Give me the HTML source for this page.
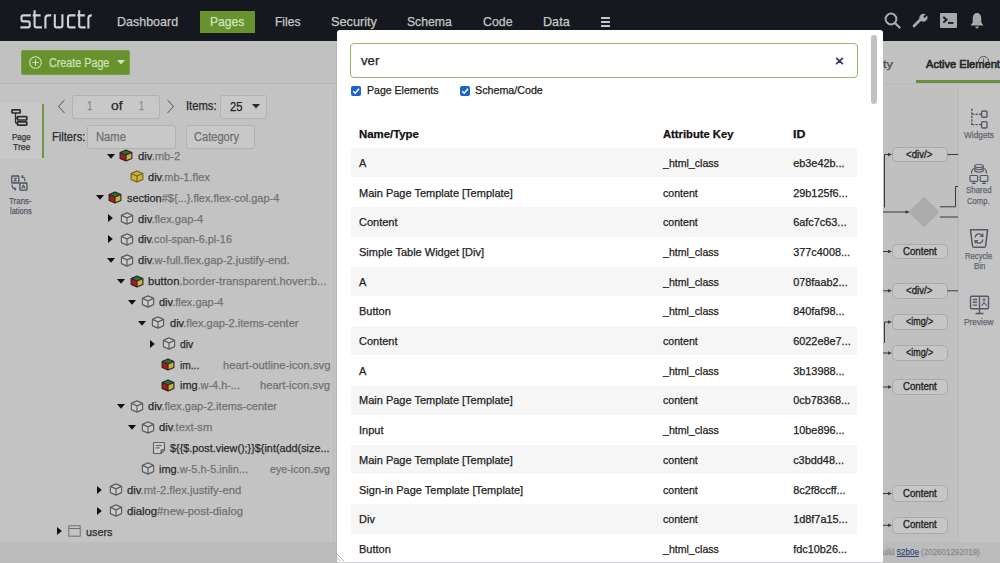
<!DOCTYPE html><html><head><meta charset="utf-8"><style>
html,body{margin:0;padding:0;width:1000px;height:563px;overflow:hidden;position:relative;font-family:"Liberation Sans", sans-serif}
.b{position:absolute;display:block}
.t{position:absolute;white-space:nowrap;line-height:1;transform-origin:0 0;-webkit-text-stroke:0.25px currentColor}
</style></head><body>
<div class="b" style="left:0.00px;top:0.00px;width:1000.00px;height:563.00px;background:#c2c2c2"></div>
<div class="b" style="left:0.00px;top:0.00px;width:1000.00px;height:41.00px;background:#16181f"></div>
<div class="b" style="left:0.00px;top:41.00px;width:1000.00px;height:41.50px;background:#c1c1c1"></div>
<div class="b" style="left:0.00px;top:82.50px;width:1000.00px;height:1.00px;background:#b9b9b9"></div>
<div class="b" style="left:0.00px;top:83.50px;width:337.00px;height:458.50px;background:#c3c3c3"></div>
<div class="b" style="left:0.00px;top:542.00px;width:1000.00px;height:21.00px;background:#bcbcbc"></div>
<div class="b" style="left:333.00px;top:83.50px;width:1.00px;height:458.50px;background:#bcbcbc"></div>
<div class="b" style="left:335.80px;top:41.00px;width:1.20px;height:522.00px;background:#b6b6b6"></div>
<svg class="b" style="left:0px;top:0px" width="100" height="40" viewBox="0 0 100 40">
<g fill="none" stroke="#d2d2d2" stroke-width="2.1" stroke-linecap="butt" stroke-linejoin="round">
<path d="M30.8 15.4 H23.4 Q21.5 15.4 21.5 17.3 V19.6 Q21.5 21.4 23.4 21.4 H27.8 Q29.7 21.4 29.7 23.3 V25.5 Q29.7 27.4 27.8 27.4 H20.4"/>
<path d="M34.6 10.3 V25.5 Q34.6 27.4 36.5 27.4 H41.9 M32.7 15.4 H40.6"/>
<path d="M45.4 28.5 V18.4 Q45.4 15.4 48.4 15.4 H51.2"/>
<path d="M54.8 14.3 V25.5 Q54.8 27.4 56.7 27.4 H60.5 Q62.4 27.4 62.4 25.5 V14.3"/>
<path d="M75.5 15.4 H69.9 Q68 15.4 68 17.3 V25.5 Q68 27.4 69.9 27.4 H75.5"/>
<path d="M79.2 10.3 V25.5 Q79.2 27.4 81.1 27.4 H85.6 M77.3 15.4 H84.8"/>
<path d="M88.4 28.5 V18.4 Q88.4 15.4 91.4 15.4 H91.8"/>
</g></svg>
<span id="t1" class="t" style="left:117.46px;top:14.99px;font-size:13.60px;color:#c8c8c8;font-weight:400;transform:scaleX(0.9184);">Dashboard</span>
<div class="b" style="left:200.00px;top:11.00px;width:55.00px;height:22.00px;background:#67922d"></div>
<span id="t2" class="t" style="left:210.16px;top:14.89px;font-size:13.60px;color:#d3e2c0;font-weight:400;transform:scaleX(0.8921);">Pages</span>
<span id="t3" class="t" style="left:275.06px;top:14.99px;font-size:13.60px;color:#c8c8c8;font-weight:400;transform:scaleX(0.8880);">Files</span>
<span id="t4" class="t" style="left:331.06px;top:14.99px;font-size:13.60px;color:#c8c8c8;font-weight:400;transform:scaleX(0.9344);">Security</span>
<span id="t5" class="t" style="left:407.46px;top:14.99px;font-size:13.60px;color:#c8c8c8;font-weight:400;transform:scaleX(0.8960);">Schema</span>
<span id="t6" class="t" style="left:483.06px;top:14.99px;font-size:13.60px;color:#c8c8c8;font-weight:400;transform:scaleX(0.9073);">Code</span>
<span id="t7" class="t" style="left:543.46px;top:14.99px;font-size:13.60px;color:#c8c8c8;font-weight:400;transform:scaleX(0.9293);">Data</span>
<div class="b" style="left:601.00px;top:17.30px;width:9.40px;height:2.00px;background:#c8c8c8;border-radius:0.5px"></div>
<div class="b" style="left:601.00px;top:21.00px;width:9.40px;height:2.00px;background:#c8c8c8;border-radius:0.5px"></div>
<div class="b" style="left:601.00px;top:24.70px;width:9.40px;height:2.00px;background:#c8c8c8;border-radius:0.5px"></div>
<svg class="b" style="left:884px;top:12px" width="17" height="17" viewBox="0 0 17 17"><circle cx="7" cy="7" r="5.4" fill="none" stroke="#a9a9a9" stroke-width="2"/><path d="M11 11 L15.5 15.5" stroke="#a9a9a9" stroke-width="2.4" stroke-linecap="round"/></svg>
<svg class="b" style="left:912px;top:12px" width="16" height="16" viewBox="0 0 16 16"><path d="M2 14 L8.5 7.5" stroke="#a9a9a9" stroke-width="2.8" stroke-linecap="round"/><path d="M8 8 A4.2 4.2 0 0 1 13.6 2.2 L11.3 4.6 L12.6 5.9 L15 3.5 A4.2 4.2 0 0 1 9 9 Z" fill="#a9a9a9"/></svg>
<svg class="b" style="left:940px;top:13px" width="17" height="15" viewBox="0 0 17 15"><rect x="0" y="0" width="17" height="15" rx="1" fill="#a9a9a9"/><path d="M3.3 4 L6.6 6.8 L3.3 9.6" fill="none" stroke="#16181f" stroke-width="1.8"/><rect x="8" y="9" width="5.5" height="1.8" fill="#16181f"/></svg>
<svg class="b" style="left:970px;top:12px" width="14" height="17" viewBox="0 0 14 17"><path d="M7 1 C9.8 1 11.3 3.5 11.3 6.5 V10.5 L13.5 13.5 H0.5 L2.7 10.5 V6.5 C2.7 3.5 4.2 1 7 1 Z" fill="#a9a9a9"/><path d="M5.3 14.5 H8.7 Q8.5 16.5 7 16.5 Q5.5 16.5 5.3 14.5Z" fill="#a9a9a9"/></svg>
<div class="b" style="left:21.00px;top:50.00px;width:109.40px;height:24.60px;background:#67922d;border-radius:3px;box-shadow:inset 0 0 0 1px #76a042"></div>
<svg class="b" style="left:29px;top:56px" width="13" height="13" viewBox="0 0 13 13"><circle cx="6.5" cy="6.5" r="5.8" fill="none" stroke="#cfe0b8" stroke-width="1.1"/><path d="M6.5 3.3 V9.7 M3.3 6.5 H9.7" stroke="#cfe0b8" stroke-width="1.1"/></svg>
<span id="t8" class="t" style="left:49.12px;top:56.74px;font-size:12.00px;color:#cfe0b6;font-weight:400;transform:scaleX(0.8957);">Create Page</span>
<svg class="b" style="left:117px;top:60px" width="8" height="4.5" viewBox="0 0 8 4.5"><path d="M0 0 H8 L4 4.5Z" fill="#d3e2c0"/></svg>
<div class="b" style="left:0.00px;top:103.00px;width:41.50px;height:55.50px;background:#c8c8c8"></div>
<div class="b" style="left:41.50px;top:104.00px;width:2.80px;height:53.50px;background:#72963f"></div>
<svg class="b" style="left:0;top:0" width="44" height="200" viewBox="0 0 44 200" fill="none" stroke="#2e2e2e" stroke-width="1.7" stroke-linejoin="round">
<rect x="12" y="109.8" width="8.2" height="3.2" rx="0.5"/><rect x="17.5" y="116.7" width="9.3" height="3.3" rx="0.5"/><rect x="17.5" y="121.9" width="9.3" height="3.2" rx="0.5"/>
<path d="M15.5 113 V116 Q15.5 118.3 17.5 118.3 M15.5 116 V121.5 Q15.5 123.5 17.5 123.5" stroke-width="1.3"/>
</svg>
<span id="t9" class="t" style="left:11.62px;top:131.64px;font-size:9.40px;color:#333;font-weight:400;transform:scaleX(0.8560);">Page</span>
<span id="t10" class="t" style="left:12.62px;top:141.64px;font-size:9.40px;color:#333;font-weight:400;transform:scaleX(0.9110);">Tree</span>
<svg class="b" style="left:0;top:0" width="44" height="200" viewBox="0 0 44 200" fill="none" stroke="#4d5262" stroke-width="1.3" stroke-linejoin="round">
<rect x="11.8" y="176" width="7" height="7" rx="0.6"/><rect x="19.9" y="183" width="7" height="7.2" rx="0.6"/>
<path d="M13.8 178.3 H16.8 L13.8 181 H16.8" stroke-width="1"/><path d="M21.8 188.5 L23.4 184.8 L25 188.5 M22.4 187.2 H24.4" stroke-width="1"/>
<path d="M25 181.2 Q25 177 21.5 176.5 M21.5 176.5 L23 175.3 M21.5 176.5 L22.8 178" stroke-width="1.1"/>
<path d="M12 184.5 Q12 188.8 16 189 M16 189 L14.6 187.6 M16 189 L14.6 190.3" stroke-width="1.1"/>
</svg>
<span id="t11" class="t" style="left:9.13px;top:197.21px;font-size:9.20px;color:#555a66;font-weight:400;transform:scaleX(0.8677);">Trans-</span>
<span id="t12" class="t" style="left:9.63px;top:207.21px;font-size:9.20px;color:#555a66;font-weight:400;transform:scaleX(0.8183);">lations</span>
<svg class="b" style="left:56.5px;top:99px" width="9" height="15" viewBox="0 0 9 15"><path d="M7.5 1 L1.5 7.5 L7.5 14" fill="none" stroke="#6a6a6a" stroke-width="1.1"/></svg>
<div class="b" style="left:71.50px;top:94.50px;width:88.50px;height:24.00px;border:1.4px solid #b2b2b2;border-radius:3px;box-sizing:border-box;background:#c8c8c8"></div>
<span id="t13" class="t" style="left:87.02px;top:100.44px;font-size:12.00px;color:#8a8a8a;font-weight:400;transform:scaleX(0.8164);">1</span>
<span id="t14" class="t" style="left:110.52px;top:100.44px;font-size:12.00px;color:#2a2a2a;font-weight:400;transform:scaleX(1.1442);">of</span>
<span id="t15" class="t" style="left:139.02px;top:100.44px;font-size:12.00px;color:#8a8a8a;font-weight:400;transform:scaleX(0.7417);">1</span>
<svg class="b" style="left:165.5px;top:99px" width="9" height="15" viewBox="0 0 9 15"><path d="M1.5 1 L7.5 7.5 L1.5 14" fill="none" stroke="#6a6a6a" stroke-width="1.1"/></svg>
<span id="t16" class="t" style="left:185.52px;top:100.44px;font-size:12.00px;color:#2a2a2a;font-weight:400;transform:scaleX(0.9354);">Items:</span>
<div class="b" style="left:219.50px;top:94.50px;width:47.00px;height:24.00px;border:1.4px solid #b2b2b2;border-radius:3px;box-sizing:border-box;background:#c8c8c8"></div>
<span id="t17" class="t" style="left:229.92px;top:100.64px;font-size:12.00px;color:#222;font-weight:400;transform:scaleX(0.9327);">25</span>
<svg class="b" style="left:252px;top:104px" width="8" height="4.5" viewBox="0 0 8 4.5"><path d="M0 0 H8 L4 4.5Z" fill="#2a2a2a"/></svg>
<span id="t18" class="t" style="left:51.52px;top:131.34px;font-size:12.00px;color:#2a2a2a;font-weight:400;transform:scaleX(0.9294);">Filters:</span>
<div class="b" style="left:87.40px;top:125.00px;width:89.10px;height:24.00px;border:1.4px solid #b2b2b2;border-radius:3px;box-sizing:border-box;background:#c8c8c8"></div>
<span id="t19" class="t" style="left:95.52px;top:131.34px;font-size:12.00px;color:#707070;font-weight:400;transform:scaleX(0.9358);">Name</span>
<div class="b" style="left:185.50px;top:125.00px;width:69.00px;height:24.00px;border:1.4px solid #b2b2b2;border-radius:3px;box-sizing:border-box;background:#c8c8c8"></div>
<span id="t20" class="t" style="left:193.52px;top:131.34px;font-size:12.00px;color:#707070;font-weight:400;transform:scaleX(0.9231);">Category</span>
<svg class="b" style="left:106.50px;top:153.60px" width="8" height="5" viewBox="0 0 8 5"><path d="M0 0 H8 L4 4.8Z" fill="#111"/></svg>
<svg class="b" style="left:119.00px;top:149.30px" width="14" height="13" viewBox="0 0 14 13">
<path d="M7 0.9 L12.9 3.4 L7 5.9 L1.1 3.4Z" fill="#2f6b3b"/><path d="M1.1 3.4 L7 5.9 V12.1 L1.1 9.6Z" fill="#a51b17"/><path d="M12.9 3.4 L7 5.9 V12.1 L12.9 9.6Z" fill="#cfae35"/>
<path d="M7 0.9 L12.9 3.4 V9.6 L7 12.1 L1.1 9.6 V3.4Z M1.1 3.4 L7 5.9 L12.9 3.4 M7 5.9 V12.1" fill="none" stroke="#262626" stroke-width="1.1" stroke-linejoin="round"/></svg>
<span id="t21" class="t" style="left:137.83px;top:149.90px;font-size:11.70px;color:#2a2a2a;font-weight:400;transform:scaleX(0.9606);"><span style="color:#2a2a2a">div</span><span style="color:#727272">.mb-2</span></span>
<svg class="b" style="left:130.00px;top:170.17px" width="14" height="13" viewBox="0 0 14 13">
<path d="M7 0.9 L12.9 3.4 V9.6 L7 12.1 L1.1 9.6 V3.4Z" fill="#cdb334"/>
<path d="M7 0.9 L12.9 3.4 V9.6 L7 12.1 L1.1 9.6 V3.4Z M1.1 3.4 L7 5.9 L12.9 3.4 M7 5.9 V12.1" fill="none" stroke="#6e6220" stroke-width="1.1" stroke-linejoin="round"/></svg>
<span id="t22" class="t" style="left:148.43px;top:170.77px;font-size:11.70px;color:#2a2a2a;font-weight:400;transform:scaleX(0.9441);"><span style="color:#2a2a2a">div</span><span style="color:#727272">.mb-1.flex</span></span>
<svg class="b" style="left:95.90px;top:195.34px" width="8" height="5" viewBox="0 0 8 5"><path d="M0 0 H8 L4 4.8Z" fill="#111"/></svg>
<svg class="b" style="left:108.40px;top:191.04px" width="14" height="13" viewBox="0 0 14 13">
<path d="M7 0.9 L12.9 3.4 L7 5.9 L1.1 3.4Z" fill="#2f6b3b"/><path d="M1.1 3.4 L7 5.9 V12.1 L1.1 9.6Z" fill="#a51b17"/><path d="M12.9 3.4 L7 5.9 V12.1 L12.9 9.6Z" fill="#cfae35"/>
<path d="M7 0.9 L12.9 3.4 V9.6 L7 12.1 L1.1 9.6 V3.4Z M1.1 3.4 L7 5.9 L12.9 3.4 M7 5.9 V12.1" fill="none" stroke="#262626" stroke-width="1.1" stroke-linejoin="round"/></svg>
<span id="t23" class="t" style="left:127.23px;top:191.64px;font-size:11.70px;color:#2a2a2a;font-weight:400;transform:scaleX(0.9372);"><span style="color:#2a2a2a">section</span><span style="color:#727272">#${...}.flex.flex-col.gap-4</span></span>
<svg class="b" style="left:107.70px;top:214.41px" width="5" height="8" viewBox="0 0 5 8"><path d="M0 0 V8 L4.8 4Z" fill="#111"/></svg>
<svg class="b" style="left:119.60px;top:211.91px" width="14" height="13" viewBox="0 0 14 13">
<path d="M7 0.9 L12.6 3.4 V9.6 L7 12.1 L1.4 9.6 V3.4Z" fill="#cdcdcd"/>
<path d="M7 0.9 L12.6 3.4 V9.6 L7 12.1 L1.4 9.6 V3.4Z M1.4 3.4 L7 5.9 L12.6 3.4 M7 5.9 V12.1" fill="none" stroke="#5f5f5f" stroke-width="1.2" stroke-linejoin="round"/></svg>
<span id="t24" class="t" style="left:137.83px;top:212.51px;font-size:11.70px;color:#2a2a2a;font-weight:400;transform:scaleX(0.9502);"><span style="color:#2a2a2a">div</span><span style="color:#727272">.flex.gap-4</span></span>
<svg class="b" style="left:107.70px;top:235.28px" width="5" height="8" viewBox="0 0 5 8"><path d="M0 0 V8 L4.8 4Z" fill="#111"/></svg>
<svg class="b" style="left:119.60px;top:232.78px" width="14" height="13" viewBox="0 0 14 13">
<path d="M7 0.9 L12.6 3.4 V9.6 L7 12.1 L1.4 9.6 V3.4Z" fill="#cdcdcd"/>
<path d="M7 0.9 L12.6 3.4 V9.6 L7 12.1 L1.4 9.6 V3.4Z M1.4 3.4 L7 5.9 L12.6 3.4 M7 5.9 V12.1" fill="none" stroke="#5f5f5f" stroke-width="1.2" stroke-linejoin="round"/></svg>
<span id="t25" class="t" style="left:137.83px;top:233.38px;font-size:11.70px;color:#2a2a2a;font-weight:400;transform:scaleX(0.9288);"><span style="color:#2a2a2a">div</span><span style="color:#727272">.col-span-6.pl-16</span></span>
<svg class="b" style="left:106.50px;top:257.95px" width="8" height="5" viewBox="0 0 8 5"><path d="M0 0 H8 L4 4.8Z" fill="#111"/></svg>
<svg class="b" style="left:119.60px;top:253.65px" width="14" height="13" viewBox="0 0 14 13">
<path d="M7 0.9 L12.6 3.4 V9.6 L7 12.1 L1.4 9.6 V3.4Z" fill="#cdcdcd"/>
<path d="M7 0.9 L12.6 3.4 V9.6 L7 12.1 L1.4 9.6 V3.4Z M1.4 3.4 L7 5.9 L12.6 3.4 M7 5.9 V12.1" fill="none" stroke="#5f5f5f" stroke-width="1.2" stroke-linejoin="round"/></svg>
<span id="t26" class="t" style="left:137.83px;top:254.25px;font-size:11.70px;color:#2a2a2a;font-weight:400;transform:scaleX(0.9541);"><span style="color:#2a2a2a">div</span><span style="color:#727272">.w-full.flex.gap-2.justify-end.</span></span>
<svg class="b" style="left:117.10px;top:278.82px" width="8" height="5" viewBox="0 0 8 5"><path d="M0 0 H8 L4 4.8Z" fill="#111"/></svg>
<svg class="b" style="left:129.60px;top:274.52px" width="14" height="13" viewBox="0 0 14 13">
<path d="M7 0.9 L12.9 3.4 L7 5.9 L1.1 3.4Z" fill="#2f6b3b"/><path d="M1.1 3.4 L7 5.9 V12.1 L1.1 9.6Z" fill="#a51b17"/><path d="M12.9 3.4 L7 5.9 V12.1 L12.9 9.6Z" fill="#cfae35"/>
<path d="M7 0.9 L12.9 3.4 V9.6 L7 12.1 L1.1 9.6 V3.4Z M1.1 3.4 L7 5.9 L12.9 3.4 M7 5.9 V12.1" fill="none" stroke="#262626" stroke-width="1.1" stroke-linejoin="round"/></svg>
<span id="t27" class="t" style="left:148.43px;top:275.12px;font-size:11.70px;color:#2a2a2a;font-weight:400;transform:scaleX(0.9675);"><span style="color:#2a2a2a">button</span><span style="color:#727272">.border-transparent.hover:b...</span></span>
<svg class="b" style="left:127.70px;top:299.69px" width="8" height="5" viewBox="0 0 8 5"><path d="M0 0 H8 L4 4.8Z" fill="#111"/></svg>
<svg class="b" style="left:140.80px;top:295.39px" width="14" height="13" viewBox="0 0 14 13">
<path d="M7 0.9 L12.6 3.4 V9.6 L7 12.1 L1.4 9.6 V3.4Z" fill="#cdcdcd"/>
<path d="M7 0.9 L12.6 3.4 V9.6 L7 12.1 L1.4 9.6 V3.4Z M1.4 3.4 L7 5.9 L12.6 3.4 M7 5.9 V12.1" fill="none" stroke="#5f5f5f" stroke-width="1.2" stroke-linejoin="round"/></svg>
<span id="t28" class="t" style="left:159.03px;top:295.99px;font-size:11.70px;color:#2a2a2a;font-weight:400;transform:scaleX(0.9385);"><span style="color:#2a2a2a">div</span><span style="color:#727272">.flex.gap-4</span></span>
<svg class="b" style="left:138.30px;top:320.56px" width="8" height="5" viewBox="0 0 8 5"><path d="M0 0 H8 L4 4.8Z" fill="#111"/></svg>
<svg class="b" style="left:151.40px;top:316.26px" width="14" height="13" viewBox="0 0 14 13">
<path d="M7 0.9 L12.6 3.4 V9.6 L7 12.1 L1.4 9.6 V3.4Z" fill="#cdcdcd"/>
<path d="M7 0.9 L12.6 3.4 V9.6 L7 12.1 L1.4 9.6 V3.4Z M1.4 3.4 L7 5.9 L12.6 3.4 M7 5.9 V12.1" fill="none" stroke="#5f5f5f" stroke-width="1.2" stroke-linejoin="round"/></svg>
<span id="t29" class="t" style="left:169.63px;top:316.86px;font-size:11.70px;color:#2a2a2a;font-weight:400;transform:scaleX(0.9430);"><span style="color:#2a2a2a">div</span><span style="color:#727272">.flex.gap-2.items-center</span></span>
<svg class="b" style="left:150.10px;top:339.63px" width="5" height="8" viewBox="0 0 5 8"><path d="M0 0 V8 L4.8 4Z" fill="#111"/></svg>
<svg class="b" style="left:162.00px;top:337.13px" width="14" height="13" viewBox="0 0 14 13">
<path d="M7 0.9 L12.6 3.4 V9.6 L7 12.1 L1.4 9.6 V3.4Z" fill="#cdcdcd"/>
<path d="M7 0.9 L12.6 3.4 V9.6 L7 12.1 L1.4 9.6 V3.4Z M1.4 3.4 L7 5.9 L12.6 3.4 M7 5.9 V12.1" fill="none" stroke="#5f5f5f" stroke-width="1.2" stroke-linejoin="round"/></svg>
<span id="t30" class="t" style="left:180.23px;top:337.73px;font-size:11.70px;color:#2a2a2a;font-weight:400;transform:scaleX(0.8852);"><span style="color:#2a2a2a">div</span></span>
<svg class="b" style="left:161.40px;top:358.00px" width="14" height="13" viewBox="0 0 14 13">
<path d="M7 0.9 L12.9 3.4 L7 5.9 L1.1 3.4Z" fill="#2f6b3b"/><path d="M1.1 3.4 L7 5.9 V12.1 L1.1 9.6Z" fill="#a51b17"/><path d="M12.9 3.4 L7 5.9 V12.1 L12.9 9.6Z" fill="#cfae35"/>
<path d="M7 0.9 L12.9 3.4 V9.6 L7 12.1 L1.1 9.6 V3.4Z M1.1 3.4 L7 5.9 L12.9 3.4 M7 5.9 V12.1" fill="none" stroke="#262626" stroke-width="1.1" stroke-linejoin="round"/></svg>
<span id="t31" class="t" style="left:180.23px;top:358.60px;font-size:11.70px;color:#2a2a2a;font-weight:400;transform:scaleX(0.8713);"><span style="color:#2a2a2a">im...</span></span>
<span id="t32" class="t" style="left:222.53px;top:358.60px;font-size:11.70px;color:#727272;font-weight:400;transform:scaleX(0.9614);">heart-outline-icon.svg</span>
<svg class="b" style="left:161.40px;top:378.87px" width="14" height="13" viewBox="0 0 14 13">
<path d="M7 0.9 L12.9 3.4 L7 5.9 L1.1 3.4Z" fill="#2f6b3b"/><path d="M1.1 3.4 L7 5.9 V12.1 L1.1 9.6Z" fill="#a51b17"/><path d="M12.9 3.4 L7 5.9 V12.1 L12.9 9.6Z" fill="#cfae35"/>
<path d="M7 0.9 L12.9 3.4 V9.6 L7 12.1 L1.1 9.6 V3.4Z M1.1 3.4 L7 5.9 L12.9 3.4 M7 5.9 V12.1" fill="none" stroke="#262626" stroke-width="1.1" stroke-linejoin="round"/></svg>
<span id="t33" class="t" style="left:180.23px;top:379.47px;font-size:11.70px;color:#2a2a2a;font-weight:400;transform:scaleX(0.9319);"><span style="color:#2a2a2a">img</span><span style="color:#727272">.w-4.h-...</span></span>
<span id="t34" class="t" style="left:260.03px;top:379.47px;font-size:11.70px;color:#727272;font-weight:400;transform:scaleX(0.9525);">heart-icon.svg</span>
<svg class="b" style="left:117.10px;top:404.04px" width="8" height="5" viewBox="0 0 8 5"><path d="M0 0 H8 L4 4.8Z" fill="#111"/></svg>
<svg class="b" style="left:130.20px;top:399.74px" width="14" height="13" viewBox="0 0 14 13">
<path d="M7 0.9 L12.6 3.4 V9.6 L7 12.1 L1.4 9.6 V3.4Z" fill="#cdcdcd"/>
<path d="M7 0.9 L12.6 3.4 V9.6 L7 12.1 L1.4 9.6 V3.4Z M1.4 3.4 L7 5.9 L12.6 3.4 M7 5.9 V12.1" fill="none" stroke="#5f5f5f" stroke-width="1.2" stroke-linejoin="round"/></svg>
<span id="t35" class="t" style="left:148.43px;top:400.34px;font-size:11.70px;color:#2a2a2a;font-weight:400;transform:scaleX(0.9474);"><span style="color:#2a2a2a">div</span><span style="color:#727272">.flex.gap-2.items-center</span></span>
<svg class="b" style="left:127.70px;top:424.91px" width="8" height="5" viewBox="0 0 8 5"><path d="M0 0 H8 L4 4.8Z" fill="#111"/></svg>
<svg class="b" style="left:140.80px;top:420.61px" width="14" height="13" viewBox="0 0 14 13">
<path d="M7 0.9 L12.6 3.4 V9.6 L7 12.1 L1.4 9.6 V3.4Z" fill="#cdcdcd"/>
<path d="M7 0.9 L12.6 3.4 V9.6 L7 12.1 L1.4 9.6 V3.4Z M1.4 3.4 L7 5.9 L12.6 3.4 M7 5.9 V12.1" fill="none" stroke="#5f5f5f" stroke-width="1.2" stroke-linejoin="round"/></svg>
<span id="t36" class="t" style="left:159.03px;top:421.21px;font-size:11.70px;color:#2a2a2a;font-weight:400;transform:scaleX(0.9568);"><span style="color:#2a2a2a">div</span><span style="color:#727272">.text-sm</span></span>
<svg class="b" style="left:151.50px;top:441.18px" width="14" height="14" viewBox="0 0 14 14" fill="none" stroke="#5f5f5f" stroke-width="1.15" stroke-linejoin="round">
<path d="M2.2 1.5 H11.8 Q12.5 1.5 12.5 2.2 V8.8 L9 12.5 H2.2 Q1.5 12.5 1.5 11.8 V2.2 Q1.5 1.5 2.2 1.5Z" fill="#cdcdcd"/><path d="M9 12.5 V9.5 Q9 8.8 9.7 8.8 H12.5 M3.8 4.5 H10 M3.8 6.8 H7.5"/></svg>
<span id="t37" class="t" style="left:169.63px;top:442.08px;font-size:11.70px;color:#2a2a2a;font-weight:400;transform:scaleX(0.9260);"><span style="color:#2a2a2a">${{$.post.view();}}${int(add(size...</span></span>
<svg class="b" style="left:140.80px;top:462.35px" width="14" height="13" viewBox="0 0 14 13">
<path d="M7 0.9 L12.6 3.4 V9.6 L7 12.1 L1.4 9.6 V3.4Z" fill="#cdcdcd"/>
<path d="M7 0.9 L12.6 3.4 V9.6 L7 12.1 L1.4 9.6 V3.4Z M1.4 3.4 L7 5.9 L12.6 3.4 M7 5.9 V12.1" fill="none" stroke="#5f5f5f" stroke-width="1.2" stroke-linejoin="round"/></svg>
<span id="t38" class="t" style="left:159.03px;top:462.95px;font-size:11.70px;color:#2a2a2a;font-weight:400;transform:scaleX(0.9388);"><span style="color:#2a2a2a">img</span><span style="color:#727272">.w-5.h-5.inlin...</span></span>
<span id="t39" class="t" style="left:269.93px;top:462.95px;font-size:11.70px;color:#727272;font-weight:400;transform:scaleX(0.9148);">eye-icon.svg</span>
<svg class="b" style="left:97.10px;top:485.72px" width="5" height="8" viewBox="0 0 5 8"><path d="M0 0 V8 L4.8 4Z" fill="#111"/></svg>
<svg class="b" style="left:109.00px;top:483.22px" width="14" height="13" viewBox="0 0 14 13">
<path d="M7 0.9 L12.6 3.4 V9.6 L7 12.1 L1.4 9.6 V3.4Z" fill="#cdcdcd"/>
<path d="M7 0.9 L12.6 3.4 V9.6 L7 12.1 L1.4 9.6 V3.4Z M1.4 3.4 L7 5.9 L12.6 3.4 M7 5.9 V12.1" fill="none" stroke="#5f5f5f" stroke-width="1.2" stroke-linejoin="round"/></svg>
<span id="t40" class="t" style="left:127.23px;top:483.82px;font-size:11.70px;color:#2a2a2a;font-weight:400;transform:scaleX(0.9627);"><span style="color:#2a2a2a">div</span><span style="color:#727272">.mt-2.flex.justify-end</span></span>
<svg class="b" style="left:97.10px;top:506.59px" width="5" height="8" viewBox="0 0 5 8"><path d="M0 0 V8 L4.8 4Z" fill="#111"/></svg>
<svg class="b" style="left:109.00px;top:504.09px" width="14" height="13" viewBox="0 0 14 13">
<path d="M7 0.9 L12.6 3.4 V9.6 L7 12.1 L1.4 9.6 V3.4Z" fill="#cdcdcd"/>
<path d="M7 0.9 L12.6 3.4 V9.6 L7 12.1 L1.4 9.6 V3.4Z M1.4 3.4 L7 5.9 L12.6 3.4 M7 5.9 V12.1" fill="none" stroke="#5f5f5f" stroke-width="1.2" stroke-linejoin="round"/></svg>
<span id="t41" class="t" style="left:127.23px;top:504.69px;font-size:11.70px;color:#2a2a2a;font-weight:400;transform:scaleX(0.9644);"><span style="color:#2a2a2a">dialog</span><span style="color:#727272">#new-post-dialog</span></span>
<svg class="b" style="left:57.00px;top:527.46px" width="5" height="8" viewBox="0 0 5 8"><path d="M0 0 V8 L4.8 4Z" fill="#111"/></svg>
<svg class="b" style="left:68.30px;top:525.46px" width="13" height="12" viewBox="0 0 13 12" fill="none" stroke="#6e6e6e" stroke-width="1">
<rect x="0.8" y="0.8" width="11.4" height="10.4"/><path d="M0.8 3.5 H12.2"/></svg>
<span id="t42" class="t" style="left:85.53px;top:525.56px;font-size:11.70px;color:#2a2a2a;font-weight:400;transform:scaleX(0.9280);"><span style="color:#2a2a2a">users</span></span>
<div class="b" style="left:880.00px;top:83.50px;width:78.00px;height:458.50px;background:#c0c0c0"></div>
<div class="b" style="left:958.00px;top:83.50px;width:42.00px;height:458.50px;background:#c4c4c4;border-left:1px solid #b8b8b8"></div>
<span id="t43" class="t" style="left:882.76px;top:59.17px;font-size:10.90px;color:#4a4a4a;font-weight:400;transform:scaleX(1.1871);">ty</span>
<span id="t44" class="t" style="left:926.06px;top:59.27px;font-size:10.90px;color:#262626;font-weight:400;transform:scaleX(1.0170);-webkit-text-stroke:0.6px #262626;">Active Element</span>
<svg class="b" style="left:0;top:0" width="1000" height="100" viewBox="0 0 1000 100" fill="none" stroke="#4a4a4a" stroke-width="0.9"><path d="M978.6 63 A5.2 5.2 0 1 1 988.6 63"/><path d="M983.6 58.5 V62"/></svg>
<div class="b" style="left:915.50px;top:80.30px;width:84.50px;height:2.90px;background:#6b8f40"></div>
<div class="b" style="left:892.00px;top:147.30px;width:55.50px;height:15.00px;background:#c6c6c6;border:1px solid #a9a9a9;border-radius:5px;box-sizing:border-box"></div>
<div class="b" style="left:892.00px;top:244.00px;width:55.50px;height:14.80px;background:#c6c6c6;border:1px solid #a9a9a9;border-radius:5px;box-sizing:border-box"></div>
<div class="b" style="left:892.00px;top:282.80px;width:55.50px;height:16.00px;background:#c6c6c6;border:1px solid #a9a9a9;border-radius:5px;box-sizing:border-box"></div>
<div class="b" style="left:892.00px;top:314.00px;width:55.50px;height:15.50px;background:#c6c6c6;border:1px solid #a9a9a9;border-radius:5px;box-sizing:border-box"></div>
<div class="b" style="left:892.00px;top:345.00px;width:55.50px;height:15.70px;background:#c6c6c6;border:1px solid #a9a9a9;border-radius:5px;box-sizing:border-box"></div>
<div class="b" style="left:892.00px;top:379.30px;width:55.50px;height:15.50px;background:#c6c6c6;border:1px solid #a9a9a9;border-radius:5px;box-sizing:border-box"></div>
<div class="b" style="left:892.00px;top:485.00px;width:55.50px;height:17.00px;background:#c6c6c6;border:1px solid #a9a9a9;border-radius:5px;box-sizing:border-box"></div>
<div class="b" style="left:892.00px;top:517.00px;width:55.50px;height:16.50px;background:#c6c6c6;border:1px solid #a9a9a9;border-radius:5px;box-sizing:border-box"></div>
<svg class="b" style="left:0;top:0" width="1000" height="563" viewBox="0 0 1000 563" fill="none" stroke="#545967" stroke-width="1.4">
<path d="M971.8 108.8 V125.4" stroke-dasharray="2.2 1.3"/><path d="M972 114.2 H981 M972 124.6 H981" stroke-dasharray="2.2 1.3"/>
<rect x="981.6" y="111" width="5.4" height="6.2" rx="1.2"/><rect x="981.6" y="121.6" width="5.4" height="6.4" rx="1.2"/>
<g stroke-width="1.2"><ellipse cx="979" cy="166" rx="4.2" ry="1.5"/><path d="M974.8 166 V171 Q979 173.5 983.2 171 V166 M974.8 168.5 Q979 171 983.2 168.5"/>
<rect x="970" y="175.5" width="7.6" height="5.8" rx="0.8"/><rect x="980.2" y="175.5" width="7.6" height="5.8" rx="0.8"/><path d="M973.8 181.3 V183.3 M971.8 183.5 H975.8 M984 181.3 V183.3 M982 183.5 H986"/>
<path d="M971.5 173.5 Q971.5 169.5 974 168.5 M986.5 173.5 Q986.5 169.5 984 168.5"/></g>
<path d="M970.5 229.8 H987.6 L985.6 246 Q985.4 247.3 984 247.3 H974.1 Q972.7 247.3 972.5 246 Z" stroke-width="1.5" stroke-linejoin="round"/>
<g stroke-width="1.3"><path d="M975.2 237.5 A3.8 3.8 0 0 1 982.4 236 M982.8 239.5 A3.8 3.8 0 0 1 975.6 241"/><path d="M982.8 233.6 V236.4 H980 M975.2 243.4 V240.6 H978"/></g>
<g stroke-width="1.4"><rect x="970.5" y="296.3" width="18" height="12.5" rx="1"/><path d="M979.5 296.3 V308.8 M972.8 299.5 H977.2 M972.8 302.3 H977.2 M972.8 305.1 H977.2 M979.5 308.8 V313.2 M975.5 313.5 H983.5"/>
<path d="M981.5 306 L984 302.5 L987 306" stroke-width="1.1"/><circle cx="984" cy="299.7" r="1.1" stroke-width="1"/></g>
</svg>
<span id="t45" class="t" style="left:964.42px;top:130.04px;font-size:9.40px;color:#62666f;font-weight:400;transform:scaleX(0.8842);">Widgets</span>
<span id="t46" class="t" style="left:966.42px;top:185.44px;font-size:9.40px;color:#62666f;font-weight:400;transform:scaleX(0.8451);">Shared</span>
<span id="t47" class="t" style="left:967.42px;top:195.54px;font-size:9.40px;color:#62666f;font-weight:400;transform:scaleX(0.8164);">Comp.</span>
<span id="t48" class="t" style="left:965.12px;top:250.74px;font-size:9.40px;color:#62666f;font-weight:400;transform:scaleX(0.8173);">Recycle</span>
<span id="t49" class="t" style="left:973.62px;top:261.44px;font-size:9.40px;color:#62666f;font-weight:400;transform:scaleX(0.8444);">Bin</span>
<span id="t50" class="t" style="left:964.02px;top:316.84px;font-size:9.40px;color:#62666f;font-weight:400;transform:scaleX(0.8863);">Preview</span>
<svg class="b" style="left:880px;top:83px" width="78" height="459" viewBox="880 83 78 459" fill="none" stroke="#3a3a3a" stroke-width="1">
<path d="M884.5 207.5 V154.5 H889"/><path d="M892 154.5 L888 152.8 V156.2Z M909.5 212 L905.5 210.3 V213.7Z M892 251.5 L888 249.8 V253.2Z M892 290.8 L888 289.1 V292.5Z M892 322 L888 320.3 V323.7Z M892 353 L888 351.3 V354.7Z M892 387 L888 385.3 V388.7Z M892 493.5 L888 491.8 V495.2Z M892 525.3 L888 523.6 V527Z" fill="#3a3a3a" stroke="none"/>
<path d="M880 212 H909 M880 251.5 H889 M880 290.8 H889 M884.5 343 V322 H889 M880 353 H889 M880 387 H889 M880 493.5 H889 M880 525.3 H889"/>
<path d="M947.5 154.5 H958 M940 206.8 H955.5 V186.5 H958 M940 217 H958 M947.5 290.8 H958"/>
</svg>
<div class="b" style="left:912.8px;top:201px;width:22px;height:22px;background:#acacac;transform:rotate(45deg)"></div>
<span id="t51" class="t" style="left:906.10px;top:149.94px;font-size:10.00px;color:#262626;font-weight:400;transform:scaleX(0.9651);-webkit-text-stroke:0.35px #262626;">&lt;div/&gt;</span>
<span id="t52" class="t" style="left:903.10px;top:246.53px;font-size:10.00px;color:#262626;font-weight:400;transform:scaleX(0.9649);-webkit-text-stroke:0.35px #262626;">Content</span>
<span id="t53" class="t" style="left:906.10px;top:285.94px;font-size:10.00px;color:#262626;font-weight:400;transform:scaleX(0.9651);-webkit-text-stroke:0.35px #262626;">&lt;div/&gt;</span>
<span id="t54" class="t" style="left:905.60px;top:316.89px;font-size:10.00px;color:#262626;font-weight:400;transform:scaleX(0.8928);-webkit-text-stroke:0.35px #262626;">&lt;img/&gt;</span>
<span id="t55" class="t" style="left:905.60px;top:347.99px;font-size:10.00px;color:#262626;font-weight:400;transform:scaleX(0.8928);-webkit-text-stroke:0.35px #262626;">&lt;img/&gt;</span>
<span id="t56" class="t" style="left:903.10px;top:382.19px;font-size:10.00px;color:#262626;font-weight:400;transform:scaleX(0.9649);-webkit-text-stroke:0.35px #262626;">Content</span>
<span id="t57" class="t" style="left:903.10px;top:488.64px;font-size:10.00px;color:#262626;font-weight:400;transform:scaleX(0.9649);-webkit-text-stroke:0.35px #262626;">Content</span>
<span id="t58" class="t" style="left:903.10px;top:520.38px;font-size:10.00px;color:#262626;font-weight:400;transform:scaleX(0.9649);-webkit-text-stroke:0.35px #262626;">Content</span>
<span id="t59" class="t" style="left:881.63px;top:547.71px;font-size:9.20px;color:#8a8a8a;font-weight:400;transform:scaleX(0.8694);">uild <span style="text-decoration:underline;color:#3a4a7a">52b0e</span> (202601292019)</span>
<div class="b" style="left:337.00px;top:29.50px;width:545.50px;height:532.10px;background:#fff;border-radius:3px 3px 0 0"></div>
<div class="b" style="left:337.00px;top:561.60px;width:545.50px;height:1.40px;background:#cfcfd1"></div>
<svg class="b" style="left:0;top:0" width="400" height="563" viewBox="0 0 400 563" fill="none" stroke="#9a9a9a" stroke-width="0.8"><path d="M336.5 553.5 L344 561 M337 557.5 L340.5 561"/></svg>
<div class="b" style="left:871.00px;top:35.00px;width:5.50px;height:68.50px;background:#c1c1c1;border-radius:3px"></div>
<div class="b" style="left:350.30px;top:42.70px;width:507.40px;height:35.70px;border:1.7px solid #93b966;border-radius:4px;box-sizing:border-box"></div>
<span id="t60" class="t" style="left:361.48px;top:53.91px;font-size:13.10px;color:#222;font-weight:400;transform:scaleX(1.0080);">ver</span>
<svg class="b" style="left:835px;top:56.5px" width="9" height="8" viewBox="0 0 9 8"><path d="M1.6 1.3 L7.4 6.7 M7.4 1.3 L1.6 6.7" stroke="#323c55" stroke-width="1.7" stroke-linecap="round"/></svg>
<svg class="b" style="left:350.90px;top:85.80px" width="10" height="10" viewBox="0 0 10 10"><rect x="0" y="0" width="10" height="10" rx="2" fill="#1862d6"/><path d="M2.2 5.2 L4.2 7.2 L8 2.8" fill="none" stroke="#fff" stroke-width="1.6"/></svg>
<span id="t61" class="t" style="left:366.79px;top:86.17px;font-size:10.20px;color:#1e1e1e;font-weight:400;transform:scaleX(1.0351);">Page Elements</span>
<svg class="b" style="left:459.50px;top:85.90px" width="10" height="10" viewBox="0 0 10 10"><rect x="0" y="0" width="10" height="10" rx="2" fill="#1862d6"/><path d="M2.2 5.2 L4.2 7.2 L8 2.8" fill="none" stroke="#fff" stroke-width="1.6"/></svg>
<span id="t62" class="t" style="left:474.59px;top:86.27px;font-size:10.20px;color:#1e1e1e;font-weight:400;transform:scaleX(1.0504);">Schema/Code</span>
<span id="t63" class="t" style="left:358.56px;top:128.77px;font-size:10.90px;color:#111;font-weight:700;transform:scaleX(1.0447);">Name/Type</span>
<span id="t64" class="t" style="left:662.56px;top:128.77px;font-size:10.90px;color:#111;font-weight:700;transform:scaleX(1.0292);">Attribute Key</span>
<span id="t65" class="t" style="left:792.56px;top:128.77px;font-size:10.90px;color:#111;font-weight:700;transform:scaleX(1.1344);">ID</span>
<span id="t66" class="t" style="left:358.56px;top:-59.23px;font-size:10.90px;color:#222;font-weight:400;transform:scaleX(1.0093);">Main Page Template [Template]</span>
<span id="t67" class="t" style="left:662.56px;top:-59.23px;font-size:10.90px;color:#222;font-weight:400;transform:scaleX(0.9714);">_html_class</span>
<span id="t68" class="t" style="left:793.16px;top:-59.23px;font-size:10.90px;color:#222;font-weight:400;">29b125f6...</span>
<div class="b" style="left:351.00px;top:148.00px;width:506.00px;height:29.20px;background:#f6f6f6"></div>
<span id="t69" class="t" style="left:358.56px;top:157.87px;font-size:10.90px;color:#222;font-weight:400;transform:scaleX(1.0093);">A</span>
<span id="t70" class="t" style="left:662.56px;top:157.87px;font-size:10.90px;color:#222;font-weight:400;transform:scaleX(0.9714);">_html_class</span>
<span id="t71" class="t" style="left:793.16px;top:157.87px;font-size:10.90px;color:#222;font-weight:400;">eb3e42b...</span>
<span id="t72" class="t" style="left:358.56px;top:187.57px;font-size:10.90px;color:#222;font-weight:400;transform:scaleX(1.0093);">Main Page Template [Template]</span>
<span id="t73" class="t" style="left:662.56px;top:187.57px;font-size:10.90px;color:#222;font-weight:400;transform:scaleX(0.9714);">content</span>
<span id="t74" class="t" style="left:793.16px;top:187.57px;font-size:10.90px;color:#222;font-weight:400;">29b125f6...</span>
<div class="b" style="left:351.00px;top:207.40px;width:506.00px;height:29.20px;background:#f6f6f6"></div>
<span id="t75" class="t" style="left:358.56px;top:217.27px;font-size:10.90px;color:#222;font-weight:400;transform:scaleX(1.0093);">Content</span>
<span id="t76" class="t" style="left:662.56px;top:217.27px;font-size:10.90px;color:#222;font-weight:400;transform:scaleX(0.9714);">content</span>
<span id="t77" class="t" style="left:793.16px;top:217.27px;font-size:10.90px;color:#222;font-weight:400;">6afc7c63...</span>
<span id="t78" class="t" style="left:358.56px;top:246.97px;font-size:10.90px;color:#222;font-weight:400;transform:scaleX(1.0093);">Simple Table Widget [Div]</span>
<span id="t79" class="t" style="left:662.56px;top:246.97px;font-size:10.90px;color:#222;font-weight:400;transform:scaleX(0.9714);">_html_class</span>
<span id="t80" class="t" style="left:793.16px;top:246.97px;font-size:10.90px;color:#222;font-weight:400;">377c4008...</span>
<div class="b" style="left:351.00px;top:266.80px;width:506.00px;height:29.20px;background:#f6f6f6"></div>
<span id="t81" class="t" style="left:358.56px;top:276.67px;font-size:10.90px;color:#222;font-weight:400;transform:scaleX(1.0093);">A</span>
<span id="t82" class="t" style="left:662.56px;top:276.67px;font-size:10.90px;color:#222;font-weight:400;transform:scaleX(0.9714);">_html_class</span>
<span id="t83" class="t" style="left:793.16px;top:276.67px;font-size:10.90px;color:#222;font-weight:400;">078faab2...</span>
<span id="t84" class="t" style="left:358.56px;top:306.37px;font-size:10.90px;color:#222;font-weight:400;transform:scaleX(1.0093);">Button</span>
<span id="t85" class="t" style="left:662.56px;top:306.37px;font-size:10.90px;color:#222;font-weight:400;transform:scaleX(0.9714);">_html_class</span>
<span id="t86" class="t" style="left:793.16px;top:306.37px;font-size:10.90px;color:#222;font-weight:400;">840faf98...</span>
<div class="b" style="left:351.00px;top:326.20px;width:506.00px;height:29.20px;background:#f6f6f6"></div>
<span id="t87" class="t" style="left:358.56px;top:336.07px;font-size:10.90px;color:#222;font-weight:400;transform:scaleX(1.0093);">Content</span>
<span id="t88" class="t" style="left:662.56px;top:336.07px;font-size:10.90px;color:#222;font-weight:400;transform:scaleX(0.9714);">content</span>
<span id="t89" class="t" style="left:793.16px;top:336.07px;font-size:10.90px;color:#222;font-weight:400;">6022e8e7...</span>
<span id="t90" class="t" style="left:358.56px;top:365.77px;font-size:10.90px;color:#222;font-weight:400;transform:scaleX(1.0093);">A</span>
<span id="t91" class="t" style="left:662.56px;top:365.77px;font-size:10.90px;color:#222;font-weight:400;transform:scaleX(0.9714);">_html_class</span>
<span id="t92" class="t" style="left:793.16px;top:365.77px;font-size:10.90px;color:#222;font-weight:400;">3b13988...</span>
<div class="b" style="left:351.00px;top:385.60px;width:506.00px;height:29.20px;background:#f6f6f6"></div>
<span id="t93" class="t" style="left:358.56px;top:395.47px;font-size:10.90px;color:#222;font-weight:400;transform:scaleX(1.0093);">Main Page Template [Template]</span>
<span id="t94" class="t" style="left:662.56px;top:395.47px;font-size:10.90px;color:#222;font-weight:400;transform:scaleX(0.9714);">content</span>
<span id="t95" class="t" style="left:793.16px;top:395.47px;font-size:10.90px;color:#222;font-weight:400;">0cb78368...</span>
<span id="t96" class="t" style="left:358.56px;top:425.17px;font-size:10.90px;color:#222;font-weight:400;transform:scaleX(1.0093);">Input</span>
<span id="t97" class="t" style="left:662.56px;top:425.17px;font-size:10.90px;color:#222;font-weight:400;transform:scaleX(0.9714);">_html_class</span>
<span id="t98" class="t" style="left:793.16px;top:425.17px;font-size:10.90px;color:#222;font-weight:400;">10be896...</span>
<div class="b" style="left:351.00px;top:445.00px;width:506.00px;height:29.20px;background:#f6f6f6"></div>
<span id="t99" class="t" style="left:358.56px;top:454.87px;font-size:10.90px;color:#222;font-weight:400;transform:scaleX(1.0093);">Main Page Template [Template]</span>
<span id="t100" class="t" style="left:662.56px;top:454.87px;font-size:10.90px;color:#222;font-weight:400;transform:scaleX(0.9714);">content</span>
<span id="t101" class="t" style="left:793.16px;top:454.87px;font-size:10.90px;color:#222;font-weight:400;">c3bdd48...</span>
<span id="t102" class="t" style="left:358.56px;top:484.57px;font-size:10.90px;color:#222;font-weight:400;transform:scaleX(1.0093);">Sign-in Page Template [Template]</span>
<span id="t103" class="t" style="left:662.56px;top:484.57px;font-size:10.90px;color:#222;font-weight:400;transform:scaleX(0.9714);">content</span>
<span id="t104" class="t" style="left:793.16px;top:484.57px;font-size:10.90px;color:#222;font-weight:400;">8c2f8ccff...</span>
<div class="b" style="left:351.00px;top:504.40px;width:506.00px;height:29.20px;background:#f6f6f6"></div>
<span id="t105" class="t" style="left:358.56px;top:514.27px;font-size:10.90px;color:#222;font-weight:400;transform:scaleX(1.0093);">Div</span>
<span id="t106" class="t" style="left:662.56px;top:514.27px;font-size:10.90px;color:#222;font-weight:400;transform:scaleX(0.9714);">content</span>
<span id="t107" class="t" style="left:793.16px;top:514.27px;font-size:10.90px;color:#222;font-weight:400;">1d8f7a15...</span>
<span id="t108" class="t" style="left:358.56px;top:543.97px;font-size:10.90px;color:#222;font-weight:400;transform:scaleX(1.0093);">Button</span>
<span id="t109" class="t" style="left:662.56px;top:543.97px;font-size:10.90px;color:#222;font-weight:400;transform:scaleX(0.9714);">_html_class</span>
<span id="t110" class="t" style="left:793.16px;top:543.97px;font-size:10.90px;color:#222;font-weight:400;">fdc10b26...</span>
</body></html>
